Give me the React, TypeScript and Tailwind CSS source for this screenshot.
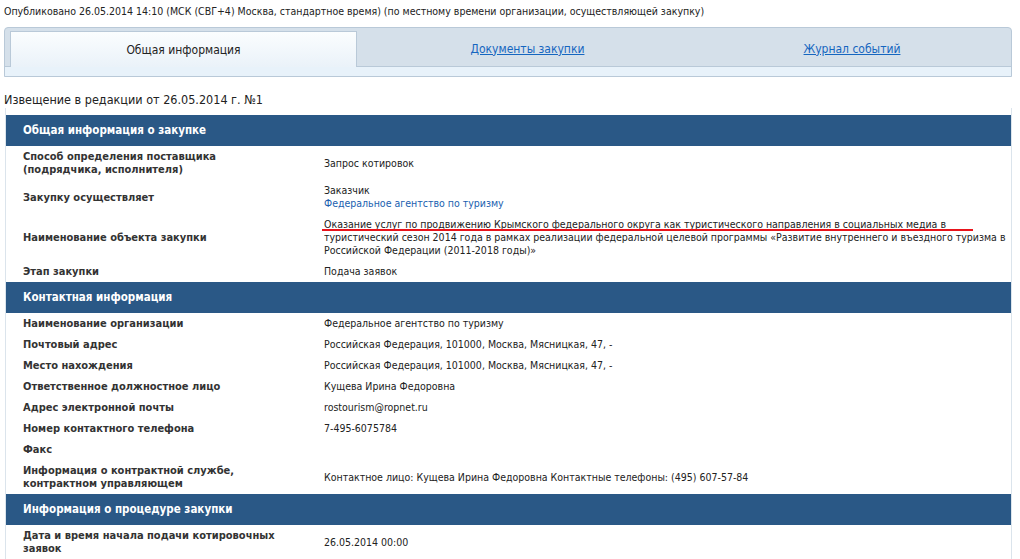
const font = { fontFamily: '"DejaVu Sans Condensed", "DejaVu Sans", Tahoma, sans-serif' };

type Row = { label: string[]; value: React.ReactNode };

function Section({ title, rows }: { title: string; rows: Row[] }) {
  return (
    <div>
      <div className="h-[31px] bg-[#2a5886] text-white font-bold text-[11.5px] flex items-center pl-[17px]">
        {title}
      </div>
      {rows.map((r, i) => (
        <div key={i} className="flex items-center py-[4px] leading-[13px] text-[#222]">
          <div className="w-[318px] pl-[17px] text-[11px] font-bold text-[#333] shrink-0">
            {r.label.map((l, j) => (
              <div key={j}>{l}</div>
            ))}
          </div>
          <div className="flex-1 pr-[2px] text-[10.5px]">{r.value}</div>
        </div>
      ))}
    </div>
  );
}

export default function App() {
  return (
    <div className="w-[1020px] h-[559px] overflow-hidden bg-white relative" style={font}>
      <div className="pl-[4px] pt-[4px] text-[10.5px] leading-[14px] text-[#222]">
        Опубликовано 26.05.2014 14:10 (МСК (СВГ+4) Москва, стандартное время) (по местному времени организации, осуществляющей закупку)
      </div>

      {/* tabs */}
      <div className="mx-[4px] mt-[9px] w-[1008px] rounded-t-[4px] border border-[#b9c9d8] bg-[#d5e0ea]">
        <div className="flex pt-[3px] pl-[5px] pr-[5px] h-[38px]">
          <div className="w-[347px] h-[36px] -mb-[1px] border border-b-0 border-[#b9c9d8] bg-gradient-to-b from-[#fbfdfe] to-[#eaf2f9] flex items-center justify-center text-[12px] text-[#222] relative z-10">
            Общая информация
          </div>
          <div className="w-[341px] flex items-center justify-center text-[12px] text-[#1566c0] underline">
            Документы закупки
          </div>
          <div className="flex-1 flex items-center justify-center text-[12px] text-[#1566c0] underline">
            Журнал событий
          </div>
        </div>
        <div className="h-[10px] bg-[#e8f2fa] border-t border-[#b9c9d8]" />
      </div>

      <div className="pl-[4px] mt-[15px] text-[12.5px] leading-[16px] text-[#222]">
        Извещение в редакции от 26.05.2014 г. №1
      </div>

      <div className="ml-[5px] w-[1007px] border-l border-r border-[#dbe4ec] pt-[7px]">
        <Section
          title="Общая информация о закупке"
          rows={[
            { label: ['Способ определения поставщика', '(подрядчика, исполнителя)'], value: 'Запрос котировок' },
            {
              label: ['Закупку осуществляет'],
              value: (
                <>
                  <div>Заказчик</div>
                  <div className="text-[#1a5fb0]">Федеральное агентство по туризму</div>
                </>
              ),
            },
            {
              label: ['Наименование объекта закупки'],
              value:
                'Оказание услуг по продвижению Крымского федерального округа как туристического направления в социальных медиа в туристический сезон 2014 года в рамках реализации федеральной целевой программы «Развитие внутреннего и въездного туризма в Российской Федерации (2011-2018 годы)»',
            },
            { label: ['Этап закупки'], value: 'Подача заявок' },
          ]}
        />
        <Section
          title="Контактная информация"
          rows={[
            { label: ['Наименование организации'], value: 'Федеральное агентство по туризму' },
            { label: ['Почтовый адрес'], value: 'Российская Федерация, 101000, Москва, Мясницкая, 47, -' },
            { label: ['Место нахождения'], value: 'Российская Федерация, 101000, Москва, Мясницкая, 47, -' },
            { label: ['Ответственное должностное лицо'], value: 'Кущева Ирина Федоровна' },
            { label: ['Адрес электронной почты'], value: 'rostourism@ropnet.ru' },
            { label: ['Номер контактного телефона'], value: '7-495-6075784' },
            { label: ['Факс'], value: '' },
            {
              label: ['Информация о контрактной службе,', 'контрактном управляющем'],
              value: 'Контактное лицо: Кущева Ирина Федоровна Контактные телефоны: (495) 607-57-84',
            },
          ]}
        />
        <Section
          title="Информация о процедуре закупки"
          rows={[{ label: ['Дата и время начала подачи котировочных', 'заявок'], value: '26.05.2014 00:00' }]}
        />
      </div>

      {/* red annotation underline */}
      <div className="absolute left-[322px] top-[229px] w-[651px] h-[2px] bg-[#e8141b]" />
    </div>
  );
}
